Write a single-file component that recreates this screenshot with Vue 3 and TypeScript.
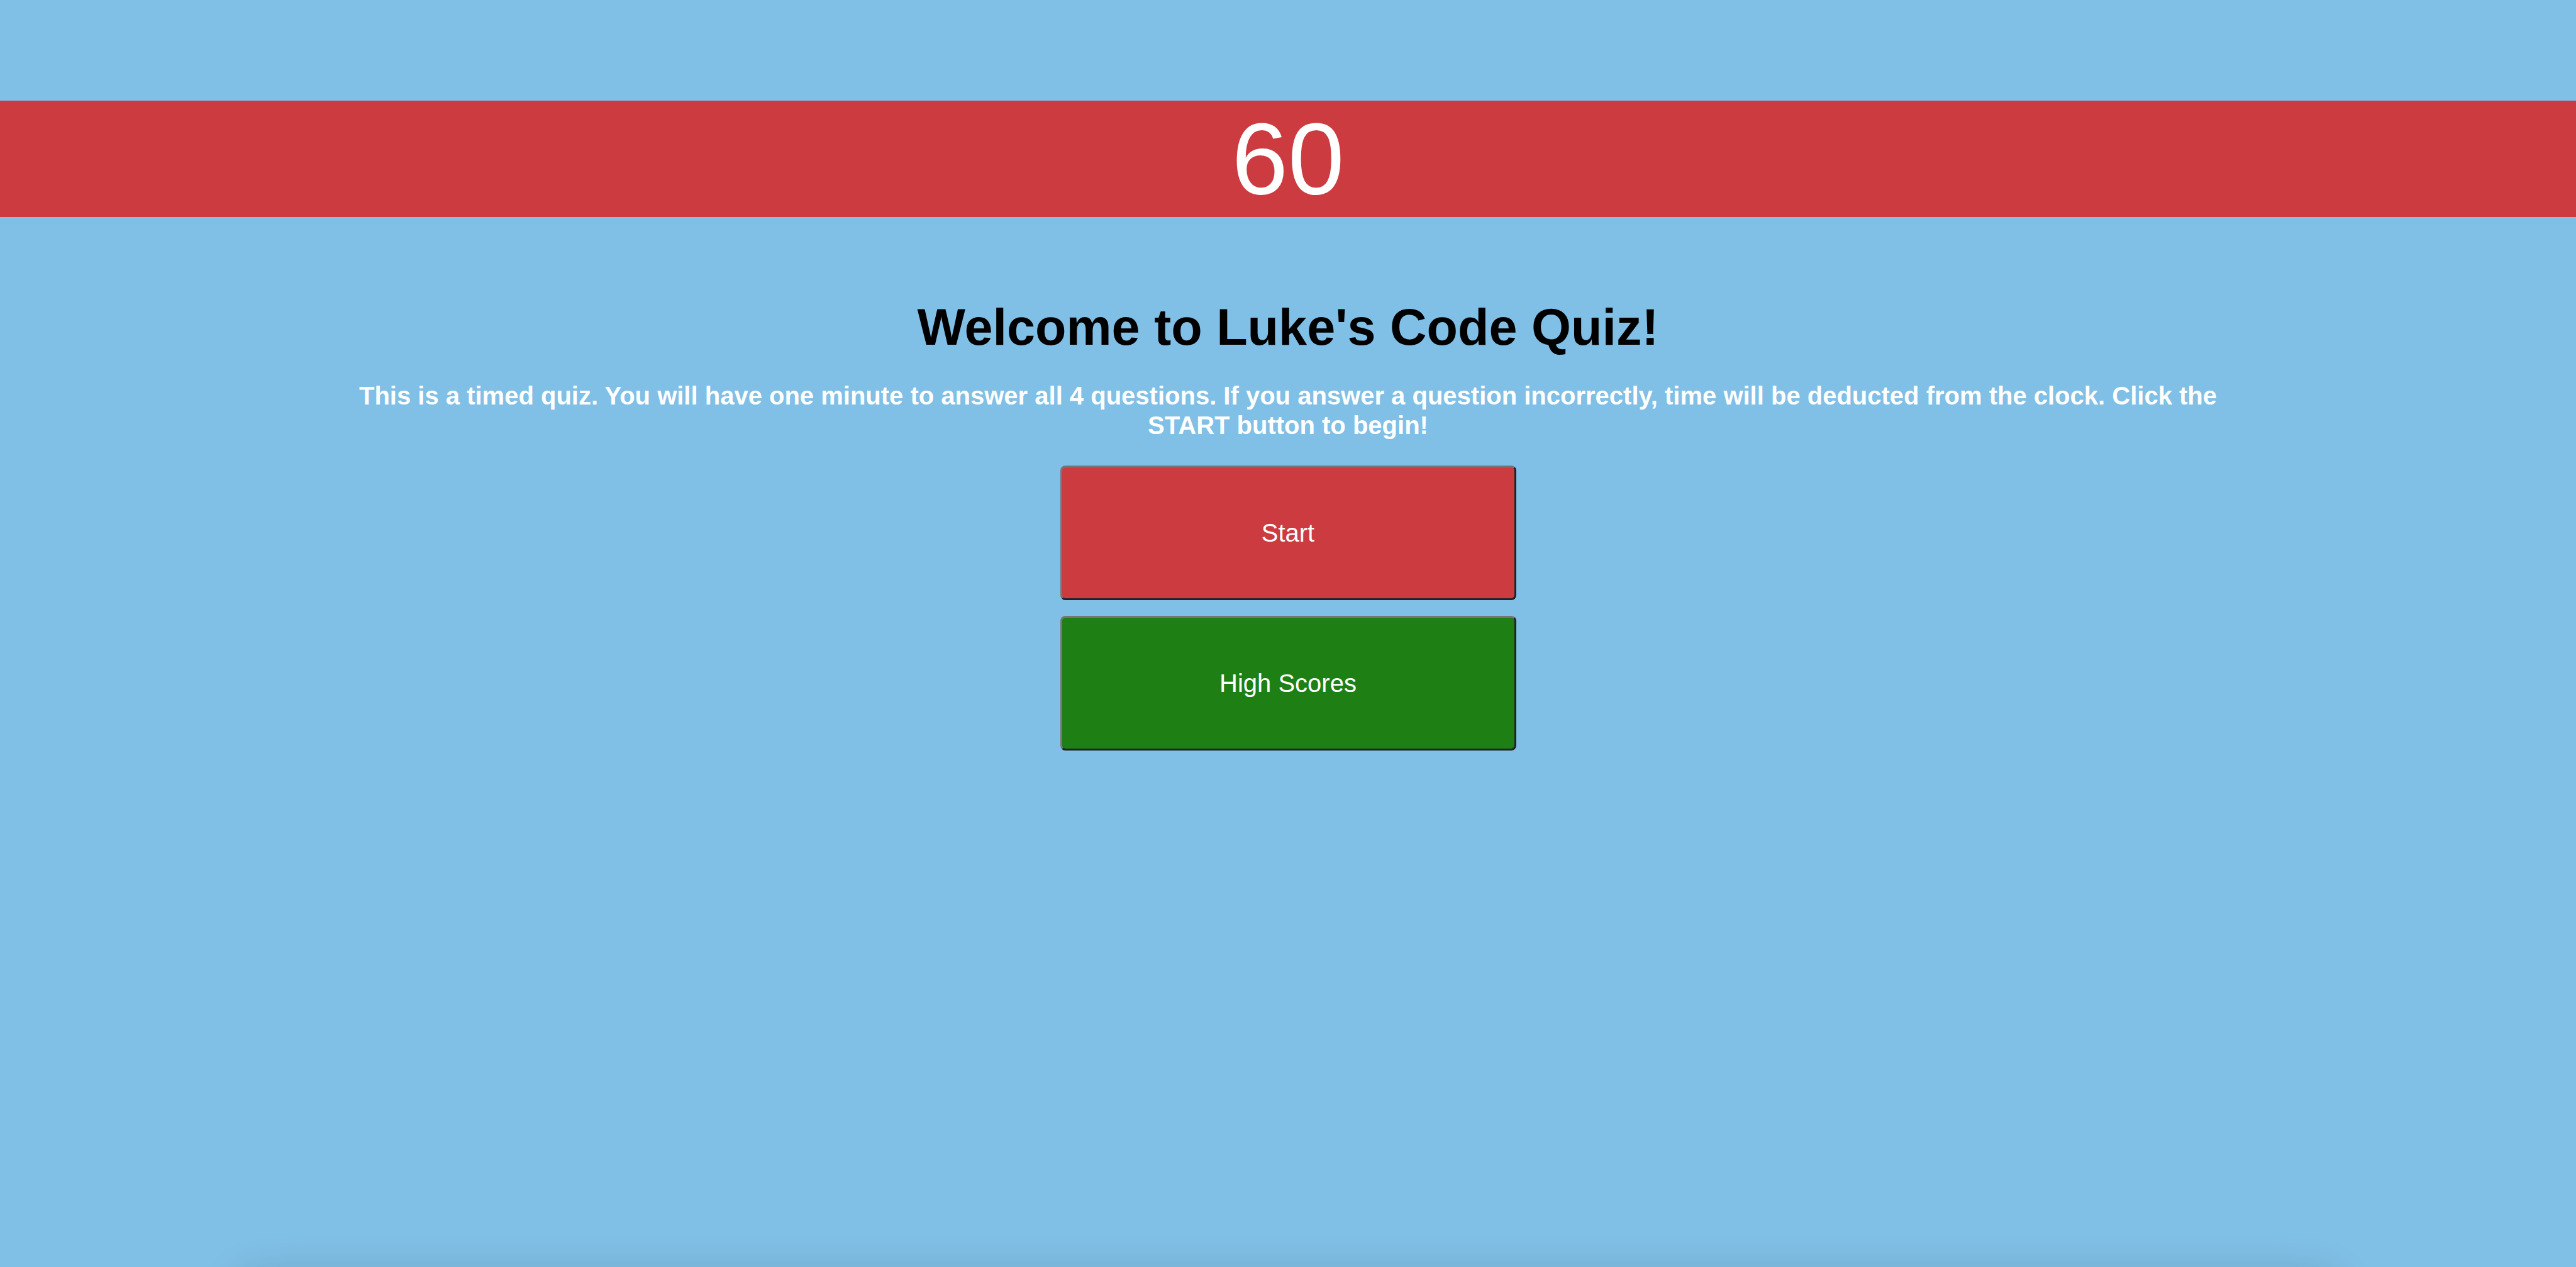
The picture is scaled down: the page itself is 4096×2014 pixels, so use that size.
<script setup lang="ts">
import { ref } from 'vue'

const secondsLeft = ref<number>(60)
</script>

<template>
  <div class="page">
    <header class="timer">{{ secondsLeft }}</header>
    <main class="intro">
      <h1 class="title">Welcome to Luke's Code Quiz!</h1>
      <p class="rules">
        This is a timed quiz. You will have one minute to answer all 4 questions. If you answer a
        question incorrectly, time will be deducted from the clock. Click the START button to begin!
      </p>
      <div class="actions">
        <button type="button" class="action start">Start</button>
        <button type="button" class="action scores">High Scores</button>
      </div>
    </main>
    <div class="shade" aria-hidden="true"></div>
  </div>
</template>

<style>
body {
  margin: 0;
  background: #80bfe6;
}
</style>

<style scoped>
.page {
  position: relative;
  box-sizing: border-box;
  min-height: 100vh;
  padding-top: 160px;
  overflow: hidden;
  background: #80bfe6;
  font-family: "Liberation Sans", Arial, Helvetica, sans-serif;
  text-align: center;
}

.timer {
  background: #cc3b3f;
  color: #fff;
  font-size: 161px;
  line-height: 185px;
}

.intro {
  display: flex;
  flex-direction: column;
  align-items: center;
  gap: 40px;
  padding-top: 129px;
}

.title {
  margin: 0;
  color: #000;
  font-size: 81px;
  font-weight: 700;
  line-height: 92px;
}

.rules {
  width: 74%;
  margin: 0;
  color: #fff;
  font-size: 40px;
  font-weight: 700;
  line-height: 47px;
}

.actions {
  display: flex;
  flex-direction: column;
  gap: 25px;
}

.action {
  box-sizing: border-box;
  width: 725px;
  height: 214px;
  border: 3px solid;
  border-color: #767676 #212121 #212121 #767676;
  border-radius: 8px;
  color: #fff;
  font-family: inherit;
  font-size: 40px;
}

.start {
  background: #cc3b3f;
}

.scores {
  background: #1e7f14;
}

/* Soft shadow rising from below the bottom edge */
.shade {
  position: absolute;
  top: calc(100% + 24px);
  right: 390px;
  left: 390px;
  height: 200px;
  box-shadow: 0 0 72px rgba(0, 0, 0, 0.22);
}
</style>
